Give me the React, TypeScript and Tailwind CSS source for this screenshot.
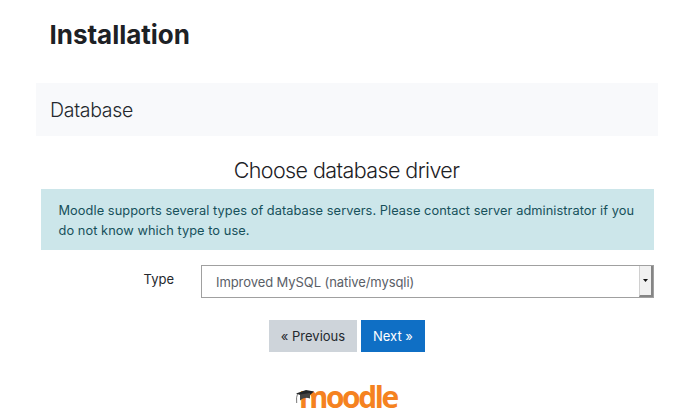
export default function App() {
  return (
    <main className="h-[414px] w-[694px] overflow-hidden bg-white font-['Inter',sans-serif] text-[#24282d]">
      <h1 className="ml-[49.5px] pt-[19px] text-[26px] leading-8 font-bold tracking-[-0.03px] text-[#1d2125]">
        <span>Installation</span>
      </h1>
      <section className="mt-8 ml-9 flex h-[53px] w-[622px] items-center bg-[#f8f9fb] pl-[14px]">
        <h2 className="text-[19.5px] leading-7 font-light tracking-[-0.3px]">Database</h2>
      </section>
      <section className="mt-[18px] ml-[40.5px] w-[613px]">
        <h2 className="pr-px pb-[2px] text-center text-[21.5px] leading-[33px] font-light tracking-[-0.59px] text-[#1d2125]">Choose database driver</h2>
        <p className="h-[61px] bg-[#cce6ea] pt-3 pl-[18px] text-[12.8px] leading-5 tracking-[0.06px] whitespace-nowrap text-[#16505a]">
          Moodle supports several types of database servers. Please contact server administrator if you
          <br />
          do not know which type to use.
        </p>
        <div className="mt-[15px] flex h-[33px]">
          <label className="w-[160px] pt-1 pr-[26.5px] text-right text-[13px] leading-5">Type</label>
          <div className="flex flex-1 justify-between border border-[#a0a0a0]">
            <span className="pt-[6px] pl-[14.5px] text-[13px] leading-5 tracking-[-0.08px] text-[#5a6067]">Improved MySQL (native/mysqli)</span>
            <span className="flex w-[14px] items-center justify-center border-r-2 border-b-2 border-l border-r-[#858585] border-b-[#858585] border-l-[#d0d0d0] bg-[#f1f1f1]">
              <svg className="h-[3px] w-[5px]" viewBox="0 0 5 3" fill="#111"><path d="M0 0h5L2.5 3z" /></svg>
            </span>
          </div>
        </div>
        <div className="mt-[22px] flex justify-center gap-1 text-[13px] leading-8">
          <button className="h-8 w-[88px] bg-[#ced4da]">« Previous</button>
          <button className="h-8 w-16 bg-[#0f6fc5] text-white">Next »</button>
        </div>
        <div className="relative mt-[28px] ml-[258.5px] h-[34px] w-[130px]">
          <span className="block origin-left scale-x-[0.965] font-['Open_Sans',sans-serif] text-[31px] leading-[33px] font-bold tracking-[-2.5px] text-[#f58220]">moodle</span>
          <svg className="absolute top-[9px] -left-[3px] h-[18px] w-5" viewBox="0 0 20 18">
            <path d="M0 4.5 10 1l8 1.5-7 6z" fill="#242628" />
            <path d="M4 5.5v6q4-4 10-2V4z" fill="#454341" />
            <path d="M1.5 5Q0 8 .7 14" fill="none" stroke="#555" strokeWidth=".8" />
          </svg>
        </div>
      </section>
    </main>
  )
}
